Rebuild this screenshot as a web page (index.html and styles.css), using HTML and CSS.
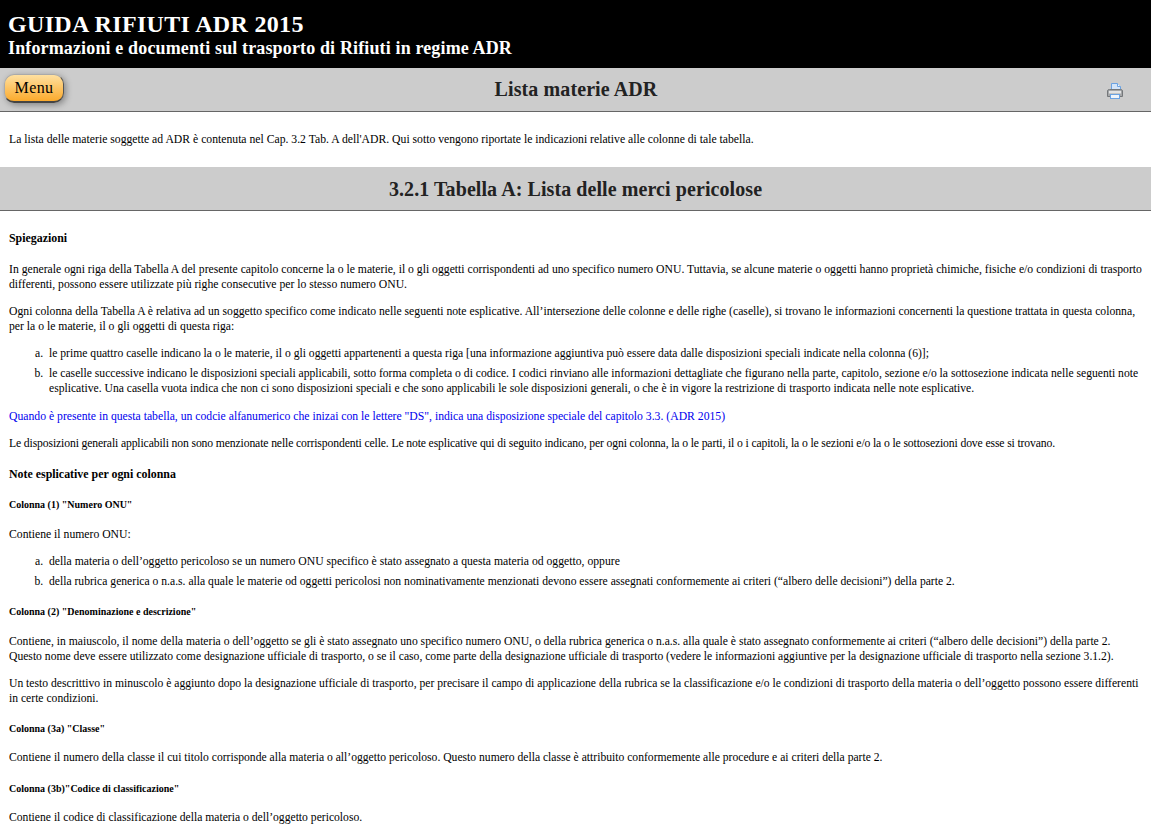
FILE: index.html
```html
<!DOCTYPE html>
<html lang="it">
<head>
  <meta charset="UTF-8">
  <title>Lista materie ADR</title>
  <link rel="stylesheet" href="styles.css">
</head>
<body>
<div class="top-header">
  <h1 class="site-title">GUIDA RIFIUTI ADR 2015</h1>
  <h2 class="site-subtitle">Informazioni e documenti sul trasporto di Rifiuti in regime ADR</h2>
</div>
<div class="page-bar">
  <a class="menu-btn">Menu</a>
  <h2 class="page-title">Lista materie ADR</h2>
  <svg class="print-icon" width="18" height="18" viewBox="0 0 18 18" aria-label="Stampa">
    <path d="M5.500 1.500H11.500L14.500 4.500V8H5.500Z" fill="#d3e4f8" stroke="#6aa2e2"/>
    <path d="M11.500 1.500V4.500H14.500" fill="#f4f8fd" stroke="#6aa2e2"/>
    <path d="M1.500 9Q1.500 7.500 3.500 7.500H14.500Q16.500 7.500 16.500 9V14.500H1.500Z" fill="#a4a6a8" stroke="#74777a"/>
    <rect x="3" y="9" width="12" height="2.500" fill="#e2e3e4"/>
    <rect x="4.500" y="12.500" width="9" height="4" fill="#eef4fb" stroke="#6aa2e2"/>
  </svg>
</div>
<p class="intro">La lista delle materie soggette ad ADR è contenuta nel Cap. 3.2 Tab. A dell'ADR. Qui sotto vengono riportate le indicazioni relative alle colonne di tale tabella.</p>
<div class="section-bar"><h2 class="section-title">3.2.1 Tabella A: Lista delle merci pericolose</h2></div>
<div class="content">
  <h4>Spiegazioni</h4>
  <p>In generale ogni riga della Tabella A del presente capitolo concerne la o le materie, il o gli oggetti corrispondenti ad uno specifico numero ONU. Tuttavia, se alcune materie o oggetti hanno proprietà chimiche, fisiche e/o condizioni di trasporto differenti, possono essere utilizzate più righe consecutive per lo stesso numero ONU.</p>
  <p>Ogni colonna della Tabella A è relativa ad un soggetto specifico come indicato nelle seguenti note esplicative. All’intersezione delle colonne e delle righe (caselle), si trovano le informazioni concernenti la questione trattata in questa colonna, per la o le materie, il o gli oggetti di questa riga:</p>
  <ol>
    <li class="snug">le prime quattro caselle indicano la o le materie, il o gli oggetti appartenenti a questa riga [una informazione aggiuntiva può essere data dalle disposizioni speciali indicate nella colonna (6)];</li>
    <li class="snug">le caselle successive indicano le disposizioni speciali applicabili, sotto forma completa o di codice. I codici rinviano alle informazioni dettagliate che figurano nella parte, capitolo, sezione e/o la sottosezione indicata nelle seguenti note esplicative. Una casella vuota indica che non ci sono disposizioni speciali e che sono applicabili le sole disposizioni generali, o che è in vigore la restrizione di trasporto indicata nelle note esplicative.</li>
  </ol>
  <p class="note">Quando è presente in questa tabella, un codcie alfanumerico che inizai con le lettere "DS", indica una disposizione speciale del capitolo 3.3. (ADR 2015)</p>
  <p class="tight">Le disposizioni generali applicabili non sono menzionate nelle corrispondenti celle. Le note esplicative qui di seguito indicano, per ogni colonna, la o le parti, il o i capitoli, la o le sezioni e/o la o le sottosezioni dove esse si trovano.</p>
  <h4>Note esplicative per ogni colonna</h4>
  <h5>Colonna (1) "Numero ONU"</h5>
  <p>Contiene il numero ONU:</p>
  <ol>
    <li>della materia o dell’oggetto pericoloso se un numero ONU specifico è stato assegnato a questa materia od oggetto, oppure</li>
    <li class="snug">della rubrica generica o n.a.s. alla quale le materie od oggetti pericolosi non nominativamente menzionati devono essere assegnati conformemente ai criteri (“albero delle decisioni”) della parte 2.</li>
  </ol>
  <h5>Colonna (2) "Denominazione e descrizione"</h5>
  <p class="snug">Contiene, in maiuscolo, il nome della materia o dell’oggetto se gli è stato assegnato uno specifico numero ONU, o della rubrica generica o n.a.s. alla quale è stato assegnato conformemente ai criteri (“albero delle decisioni”) della parte 2. Questo nome deve essere utilizzato come designazione ufficiale di trasporto, o se il caso, come parte della designazione ufficiale di trasporto (vedere le informazioni aggiuntive per la designazione ufficiale di trasporto nella sezione 3.1.2).</p>
  <p class="snug">Un testo descrittivo in minuscolo è aggiunto dopo la designazione ufficiale di trasporto, per precisare il campo di applicazione della rubrica se la classificazione e/o le condizioni di trasporto della materia o dell’oggetto possono essere differenti in certe condizioni.</p>
  <h5>Colonna (3a) "Classe"</h5>
  <p class="snug">Contiene il numero della classe il cui titolo corrisponde alla materia o all’oggetto pericoloso. Questo numero della classe è attribuito conformemente alle procedure e ai criteri della parte 2.</p>
  <h5>Colonna (3b)"Codice di classificazione"</h5>
  <p class="snug">Contiene il codice di classificazione della materia o dell’oggetto pericoloso.</p>
</div>
</body>
</html>
```

FILE: styles.css
```css
* { box-sizing: border-box; }
body { margin: 0; background: #fff; color: #000; font-family: "Liberation Serif", "Times New Roman", serif; font-size: 11.7px; line-height: 15px; }

.top-header { height: 68px; background: #000; color: #fff; padding: 10px 8px 0; }
.site-title { margin: 0; font-size: 24px; line-height: 28px; font-weight: bold; letter-spacing: .32px; }
.site-subtitle { margin: 0; font-size: 18px; line-height: 20px; font-weight: bold; letter-spacing: .14px; }

.page-bar { height: 44px; background: #ccc; border-bottom: 1px solid #666; display: flex; align-items: center; padding: 0 27px 0 4px; }
.menu-btn { width: 60px; height: 29px; margin-bottom: 3px; border: 1px solid #aaa; border-bottom: 2px solid #444; border-right-color: #555; border-radius: 10px; background: linear-gradient(#ffe0a0, #fbaa2c); box-shadow: 2px 2px 6px rgba(0,0,0,.35); font-size: 16px; line-height: 26px; letter-spacing: .4px; text-align: center; color: #000; }
.page-title { flex: 1; margin: 0 18px 2px 0; font-size: 20px; line-height: 24px; font-weight: bold; text-align: center; color: #222; letter-spacing: .1px; }
.print-icon { flex: none; margin-top: 2px; }

.intro { margin: 0; padding: 20px 9px; }
.section-bar { height: 44px; background: #ccc; border-bottom: 1px solid #666; display: flex; align-items: center; justify-content: center; }
.section-title { margin: 0; font-size: 20px; line-height: 24px; font-weight: bold; color: #222; letter-spacing: .08px; }

.content { padding: 4px 7px 0 9px; }
.content h4 { margin: 16px 0; font-size: 11.9px; line-height: 15px; }
.content h5 { margin: 17.3px 0 15.5px; font-size: 10px; line-height: 12px; }
.content p { margin: 12px 0; }
.content ol { margin: 12px 0 13px; padding-left: 40px; list-style-type: lower-alpha; }
.content li { margin-bottom: 5px; }
.content li::marker { content: counter(list-item, lower-alpha) ".  "; }
.content .note { color: #0000ee; }
/* these lines run a little narrower in the original */
.content .snug { font-size: 11.63px; }
.content .tight { letter-spacing: -.133px; }
```
